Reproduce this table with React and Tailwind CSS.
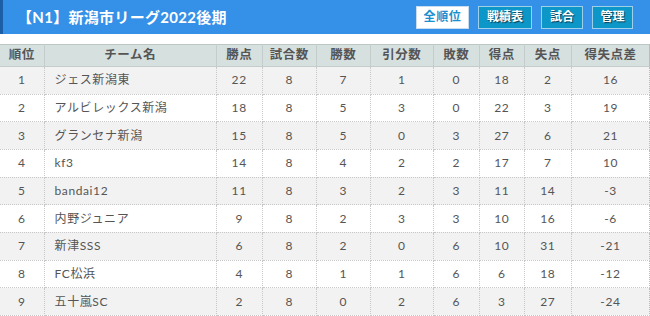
import React from "react";

const cols = [
  { label: "順位", w: 44 },
  { label: "チーム名", w: 172 },
  { label: "勝点", w: 46 },
  { label: "試合数", w: 54 },
  { label: "勝数", w: 54 },
  { label: "引分数", w: 63 },
  { label: "敗数", w: 46 },
  { label: "得点", w: 45 },
  { label: "失点", w: 47 },
  { label: "得失点差", w: 78 },
];

const rows = [
  [1, "ジェス新潟東", 22, 8, 7, 1, 0, 18, 2, 16],
  [2, "アルビレックス新潟", 18, 8, 5, 3, 0, 22, 3, 19],
  [3, "グランセナ新潟", 15, 8, 5, 0, 3, 27, 6, 21],
  [4, "kf3", 14, 8, 4, 2, 2, 17, 7, 10],
  [5, "bandai12", 11, 8, 3, 2, 3, 11, 14, -3],
  [6, "内野ジュニア", 9, 8, 2, 3, 3, 10, 16, -6],
  [7, "新津SSS", 6, 8, 2, 0, 6, 10, 31, -21],
  [8, "FC松浜", 4, 8, 1, 1, 6, 6, 18, -12],
  [9, "五十嵐SC", 2, 8, 0, 2, 6, 3, 27, -24],
];

export default function App() {
  return (
    <div className="w-[650px] h-[316px] overflow-hidden bg-white font-['Lato','Noto_Sans_CJK_JP',sans-serif]">
      <div className="h-[34px] bg-[#3590e7] border-l-[3px] border-[#1d5fa6] flex items-center justify-between pl-[14px] pr-[17px]">
        <div className="text-white font-bold text-[15px] tracking-[0.02em]">【N1】新潟市リーグ2022後期</div>
        <div className="flex items-center gap-[9px]">
          <div className="w-[53px] h-[23px] flex items-center justify-center bg-white border border-[#c8dcef] text-[#1a8fd0] font-bold text-[12px] tracking-[0.05em]">全順位</div>
          <div className="w-[54px] h-[23px] flex items-center justify-center bg-[#0d97c9] border border-[#9fd0ea] text-white font-bold text-[12px] [text-shadow:1px_1px_1px_rgba(0,0,0,0.6)]">戦績表</div>
          <div className="w-[42px] h-[23px] flex items-center justify-center bg-[#0d97c9] border border-[#9fd0ea] text-white font-bold text-[12px] [text-shadow:1px_1px_1px_rgba(0,0,0,0.6)]">試合</div>
          <div className="w-[41px] h-[23px] flex items-center justify-center bg-[#0d97c9] border border-[#9fd0ea] text-white font-bold text-[12px] [text-shadow:1px_1px_1px_rgba(0,0,0,0.6)]">管理</div>
        </div>
      </div>
      <div className="h-[10px]" />
      <table className="table-fixed border-collapse w-[650px] text-[#555]">
        <colgroup>
          {cols.map((c, i) => (
            <col key={i} style={{ width: c.w }} />
          ))}
        </colgroup>
        <thead>
          <tr className="h-[22px] bg-[#d6e0df]">
            {cols.map((c, i) => (
              <th
                key={i}
                className="border-t border-t-[#bcc6c5] border-b border-b-[#c4cccc] border-l border-l-[#e6ecec] first:border-l-0 border-r border-r-[#c4cccc] last:border-r-[#bbb] p-0 text-[12.5px] font-bold text-[#555] tracking-[0.04em]"
              >
                {c.label}
              </th>
            ))}
          </tr>
        </thead>
        <tbody>
          {rows.map((r, ri) => (
            <tr key={ri} className={`h-[27.67px] ${ri % 2 === 0 ? "bg-[#f2f2f2]" : "bg-white"}`}>
              {r.map((v, ci) => (
                <td
                  key={ci}
                  className={`p-0 border-b border-dotted border-[#c8c8c8] ${ci === 0 ? "border-r border-l-0" : "border-r"} ${ci === 9 ? "border-r-solid border-r-[#bbb]" : ""} text-[12px] tracking-[0.05em] ${ci === 1 ? "text-left pl-[10px]" : "text-center"}`}
                >
                  {v}
                </td>
              ))}
            </tr>
          ))}
        </tbody>
      </table>
    </div>
  );
}
